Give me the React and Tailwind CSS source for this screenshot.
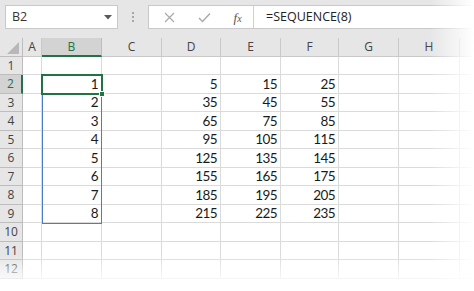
import React from 'react'

const COLS = [
  { key: 'A', w: 'w-[19px]' },
  { key: 'B', w: 'w-[60px]' },
  { key: 'C', w: 'w-[60px]' },
  { key: 'D', w: 'w-[59px]' },
  { key: 'E', w: 'w-[60px]' },
  { key: 'F', w: 'w-[58px]' },
  { key: 'G', w: 'w-[60px]' },
  { key: 'H', w: 'w-[61px]' },
]

const HEIGHTS = ['h-[18px]', 'h-[19px]']

function cellValue(row, col) {
  if (row < 2 || row > 9) return ''
  const i = row - 2
  if (col === 'B') return i + 1
  if (col === 'D') return 5 + 30 * i
  if (col === 'E') return 15 + 30 * i
  if (col === 'F') return 25 + 30 * i
  return ''
}

function Toolbar() {
  return (
    <div className="h-[38px] bg-[#e6e6e6] flex items-start pt-[5px] pl-[5px]">
      <div className="w-[113px] h-[24px] bg-white border border-[#c9c9c9] flex items-center justify-between pl-[6px] pr-[5px]">
        <span className="text-[12.5px] text-[#333]">B2</span>
        <svg width="8" height="5" viewBox="0 0 8 5">
          <polygon points="0,0 8,0 4,4.5" fill="#5a5a5a" />
        </svg>
      </div>
      <div className="w-[30px] h-[24px] flex flex-col items-center justify-center gap-[2px]">
        <span className="w-[2px] h-[2px] bg-[#a8a8a8]" />
        <span className="w-[2px] h-[2px] bg-[#a8a8a8]" />
        <span className="w-[2px] h-[2px] bg-[#a8a8a8]" />
      </div>
      <div className="flex-1 h-[24px] bg-white border border-[#c9c9c9] flex items-center">
        <div className="w-[105px] flex items-center justify-around pl-[4px] border-r border-[#d0d0d0] h-full">
          <svg width="11" height="11" viewBox="0 0 11 11">
            <path d="M1 1 L10 10 M10 1 L1 10" stroke="#a9a9a9" strokeWidth="1.2" fill="none" />
          </svg>
          <svg width="13" height="11" viewBox="0 0 13 11">
            <path d="M1 6 L4.5 9.5 L12 1.5" stroke="#a9a9a9" strokeWidth="1.4" fill="none" />
          </svg>
          <span className="italic text-[#555] text-[13px] font-['Liberation_Serif',serif] leading-none">
            f<span className="text-[10px]">x</span>
          </span>
        </div>
        <span className="pl-[12px] text-[12.5px] text-[#222]">=SEQUENCE(8)</span>
      </div>
    </div>
  )
}

function HeaderRow() {
  return (
    <div className="flex h-[19px]">
      <div className="w-[23px] shrink-0 bg-[#e6e6e6] border-r border-b border-[#bdbdbd] flex items-end justify-end pr-[3px] pb-[2px]">
        <svg width="12" height="12" viewBox="0 0 12 12">
          <polygon points="12,0 12,12 0,12" fill="#b8b8b8" />
        </svg>
      </div>
      {COLS.map((c) =>
        c.key === 'B' ? (
          <div
            key={c.key}
            className={`${c.w} shrink-0 bg-[#d3d3d3] border-r border-[#bdbdbd] border-b-2 border-b-[#217346] flex items-center justify-center text-[#217346] text-[12px]`}
          >
            {c.key}
          </div>
        ) : (
          <div
            key={c.key}
            className={`${c.w} shrink-0 bg-[#e6e6e6] border-r border-b border-[#c9c9c9] flex items-center justify-center text-[#444] text-[12px]`}
          >
            {c.key}
          </div>
        )
      )}
      <div className="flex-1 bg-[#e6e6e6] border-b border-[#c9c9c9]" />
    </div>
  )
}

function SheetRow({ row }) {
  const h = HEIGHTS[(row - 1) % 2]
  const active = row === 2
  return (
    <div className={`flex ${h}`}>
      <div
        className={
          active
            ? 'w-[23px] shrink-0 bg-[#d3d3d3] border-b border-[#bdbdbd] border-r-2 border-r-[#217346] flex items-center justify-center text-[#217346] text-[12px]'
            : 'w-[23px] shrink-0 bg-[#e6e6e6] border-r border-b border-[#bdbdbd] flex items-center justify-center text-[#444] text-[12px]'
        }
      >
        {row}
      </div>
      {COLS.map((c) => (
        <div
          key={c.key}
          className={`${c.w} shrink-0 border-r border-b border-[#dadada] flex items-center justify-end pr-[3px] font-['Lato',sans-serif] text-[13.5px] tracking-[-0.6px] text-[#1a1a1a]`}
        >
          {cellValue(row, c.key)}
        </div>
      ))}
      <div className="flex-1 border-b border-[#dadada]" />
    </div>
  )
}

export default function App() {
  const rows = [1, 2, 3, 4, 5, 6, 7, 8, 9, 10, 11, 12]
  return (
    <div className="relative w-[474px] h-[291px] overflow-hidden bg-white font-['Open_Sans',sans-serif]">
      <Toolbar />
      <div className="relative">
        <HeaderRow />
        {rows.map((r) => (
          <SheetRow key={r} row={r} />
        ))}
        {/* spill range */}
        <div className="absolute left-[42px] top-[37px] w-[60px] h-[149px] border border-[#4f7ac7]" />
        {/* active cell */}
        <div className="absolute left-[41px] top-[36px] w-[62px] h-[21px] border-2 border-[#217346]" />
        <div className="absolute left-[99px] top-[53px] w-[6px] h-[6px] bg-[#217346] border border-white" />
      </div>
      <div className="absolute top-0 right-0 h-full w-[44px] bg-gradient-to-r from-white/0 to-white" />
      <div className="absolute bottom-0 left-0 w-full h-[36px] bg-gradient-to-b from-white/0 via-white/60 to-white" />
    </div>
  )
}
